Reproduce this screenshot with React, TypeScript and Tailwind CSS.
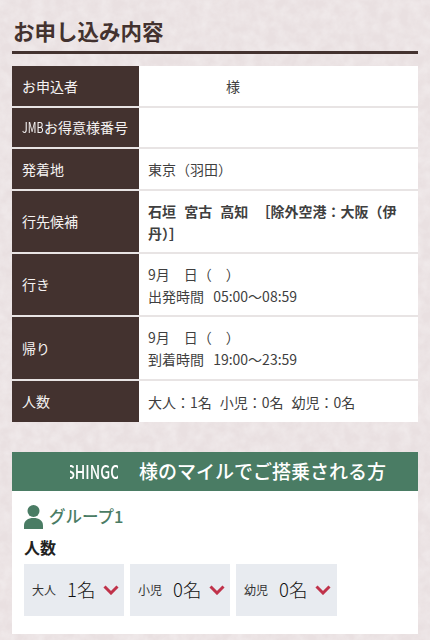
const jp = "font-['Noto_Sans_CJK_JP','Noto_Sans',sans-serif]";

interface Row {
  label: React.ReactNode;
  rowClass: string;
  content: React.ReactNode;
}

const rows: Row[] = [
  { label: "お申込者", rowClass: "h-[42px]", content: <span className="pl-[78px]">様</span> },
  {
    label: (
      <>
        {/* JMB is squeezed in the reference */}
        <span className="inline-block scale-x-[0.77] origin-left -mr-[6px]">JMB</span>お得意様番号
      </>
    ),
    rowClass: "h-[41px]",
    content: null,
  },
  { label: "発着地", rowClass: "h-[42px]", content: "東京（羽田）" },
  {
    label: "行先候補",
    rowClass: "h-[63px]",
    content: <span className="font-bold block [word-spacing:5px]">石垣 宮古 高知 ［除外空港：大阪（伊丹）］</span>,
  },
  {
    label: "行き",
    rowClass: "h-[63px]",
    content: (
      <>
        <div>9月　日（　）</div>
        <div className="[word-spacing:6px]">出発時間 05:00〜08:59</div>
      </>
    ),
  },
  {
    label: "帰り",
    rowClass: "h-[64px]",
    content: (
      <>
        <div>9月　日（　）</div>
        <div className="[word-spacing:6px]">到着時間 19:00〜23:59</div>
      </>
    ),
  },
  {
    label: "人数",
    rowClass: "h-[41px]",
    content: (
      <div className="flex gap-2">
        <span>大人：1名</span>
        <span>小児：0名</span>
        <span>幼児：0名</span>
      </div>
    ),
  },
];

const counts = [
  { label: "大人", value: "1名", width: "w-[100px]" },
  { label: "小児", value: "0名", width: "w-[100px]" },
  { label: "幼児", value: "0名", width: "w-[101px]" },
];

export default function App() {
  return (
    <div className={`${jp} relative w-[430px] h-[640px] overflow-hidden bg-[#e9e0e1] text-[#3f3f3f]`}>
      {/* paper grain */}
      <svg className="absolute inset-0 pointer-events-none" width="430" height="640">
        <filter id="grain">
          <feTurbulence type="fractalNoise" baseFrequency="0.09" numOctaves="3" seed="4" />
          <feColorMatrix values="0 0 0 0 1  0 0 0 0 1  0 0 0 0 1  0.9 0 0 0 -0.25" />
        </filter>
        <rect width="430" height="640" filter="url(#grain)" opacity="0.6" />
      </svg>

      <div className="relative px-3 pt-[15px]">
        {/* Heading */}
        <h1 className="text-[21.5px] leading-[32px] font-bold text-[#43322f] pl-px">お申し込み内容</h1>
        <div className="h-[3px] bg-[#43322f] mt-[4px]" />

        {/* Summary table */}
        <div className="mt-3 bg-white">
          {rows.map((r, i) => (
            <div key={i} className={`flex border-b-2 border-[#e8e4e4] last:border-b-0 ${r.rowClass}`}>
              <div className="w-[127px] shrink-0 bg-[#43322f] text-[#f5f2f2] text-[14px] pl-[10px] flex items-center whitespace-nowrap">
                <span>{r.label}</span>
              </div>
              <div className="flex-1 pl-[9px] pr-[10px] text-[14px] leading-[22px] flex flex-col justify-center">
                {r.content}
              </div>
            </div>
          ))}
        </div>

        {/* Group card */}
        <div className="mt-[30px] bg-white h-[182px]">
          <div className="h-[39px] bg-[#4a7c64] text-white flex items-center text-[19px] font-medium">
            <span className="w-[48px] ml-[58px] overflow-hidden flex justify-center whitespace-nowrap">
              <span className="inline-block scale-x-[0.75]">SHINGO</span>
            </span>
            <span className="ml-[21px]">様のマイルでご搭乗される方</span>
          </div>
          <div className="px-3 pt-[13px]">
            <div className="flex items-center gap-[6px] h-[26px]">
              <svg width="19" height="24" viewBox="0 0 19 24" fill="#4a7c64">
                <circle cx="9.500" cy="6" r="6" />
                <path d="M0 24v-3.500C0 15.500 4 13 9.500 13S19 15.500 19 20.500V24z" />
              </svg>
              <span className="text-[16.500px] font-medium text-[#4a7c64] pb-px">グループ1</span>
            </div>
            <div className="text-[16px] font-bold text-[#222] mt-[5px] leading-[24px]">人数</div>
            <div className="flex gap-[6px] mt-[5px]">
              {counts.map((c) => (
                <div key={c.label} className={`${c.width} h-[52px] bg-[#e8ebf0] flex items-center pl-[8px]`}>
                  <span className="text-[12px] w-[35px] text-[#333]">{c.label}</span>
                  <span className="text-[18.500px] font-light text-[#111] w-[36px] whitespace-nowrap">{c.value}</span>
                  <svg width="16" height="10" viewBox="0 0 16 10" fill="none" stroke="#c0324a" strokeWidth="3">
                    <path d="M1.500 1.500 8 8l6.500-6.500" />
                  </svg>
                </div>
              ))}
            </div>
          </div>
        </div>
      </div>
    </div>
  );
}
